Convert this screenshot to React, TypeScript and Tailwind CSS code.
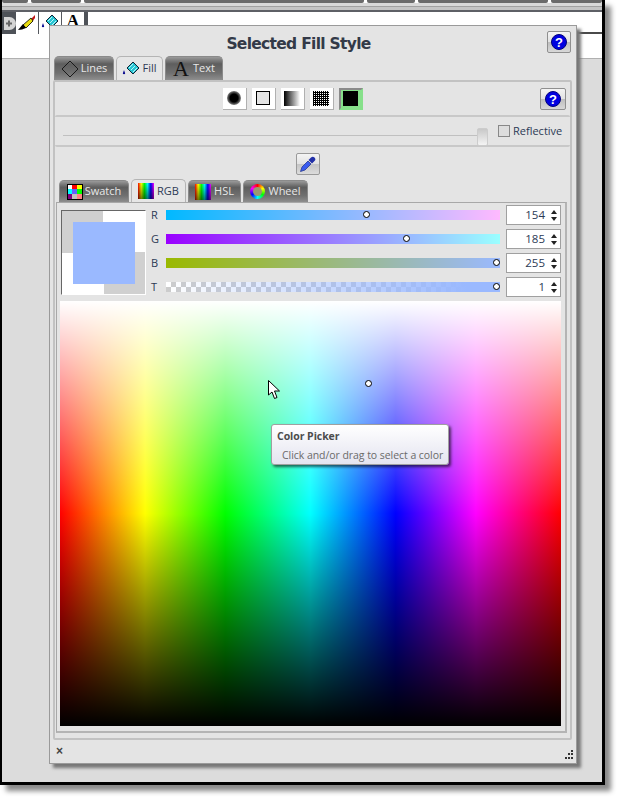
import React from "react";

function Help({ w = "w-[24px]", h = "h-[22px]" }: { w?: string; h?: string }) {
  return (
    <div className={`${w} ${h} flex items-center justify-center rounded-[2px] border border-[#8f8f8f] bg-[linear-gradient(#f4f4f4,#e2e2e2_50%,#bdbdbd_50%,#d8d8d8)]`}>
      <div className="w-[16px] h-[16px] rounded-full bg-[#0000e0] border border-[#00007a] flex items-center justify-center text-white text-[13px] font-bold leading-none [font-family:'Liberation_Sans',sans-serif]">?</div>
    </div>
  );
}

function Bucket({ s = 15 }: { s?: number }) {
  return (
    <svg width={s + 3} height={s} viewBox="0 0 18 15">
      <path d="M5 7 L11 1 L17 7 L11 13 Z" fill="#25c6d4" stroke="#123" strokeWidth="1" />
      <path d="M7 7 L11 3 M9 9 L13 5 M11 11 L15 7" stroke="#bdf4f8" strokeWidth="1" />
      <path d="M2 9 L3.2 12.5 A1.4 1.4 0 0 1 0.8 12.5 Z" fill="#00008c" />
    </svg>
  );
}

function Brush() {
  return (
    <svg width="18" height="16" viewBox="0 0 18 16">
      <path d="M13 4 L17 0 L17 3 L14 7 Z" fill="#c01818" />
      <path d="M5 10 L13 3 L15 6 L8 13 Z" fill="#e8dc10" stroke="#000" strokeWidth="0.8" />
      <path d="M0 15 L5 9 L8 13 Q4 15 0 15 Z" fill="#000" />
    </svg>
  );
}

function Tab({ active, w, children, h = "h-[24px]" }: { active?: boolean; w: string; h?: string; children: React.ReactNode }) {
  return (
    <div
      className={`${w} ${h} flex items-center justify-center gap-[2px] rounded-t-[5px] border border-b-0 text-[11px] ${
        active
          ? "bg-[#e6e6e6] border-[#b4b4b4] text-[#2c3a55]"
          : "bg-[linear-gradient(#9a9a9a,#5e5e5e_30%,#707070_70%,#8e8e8e)] border-[#8a8a8a] text-[#e8e8e8] mt-[1px]"
      }`}
    >
      {children}
    </div>
  );
}

function Style({ children, selected }: { children: React.ReactNode; selected?: boolean }) {
  return (
    <div className={`w-[24px] h-[22px] flex items-center justify-center ${selected ? "border-2 border-[#86e08a] border-t-[#8a8a8a] border-l-[#8a8a8a] bg-[#86e08a]" : "bg-white border-r border-b border-[#b0b0b0]"}`}>
      {children}
    </div>
  );
}

function Num({ v }: { v: string }) {
  return (
    <div className="w-[55px] h-[20px] bg-white border border-[#a0a0a0] flex items-center justify-end pr-[3px] gap-[5px] text-[11.5px] text-[#2c3a55]">
      <span>{v}</span>
      <div className="flex flex-col gap-[3px] w-[7px] items-center">
        <div className="w-0 h-0 border-x-[3px] border-x-transparent border-b-[4px] border-b-[#222]" />
        <div className="w-0 h-0 border-x-[3px] border-x-transparent border-t-[4px] border-t-[#222]" />
      </div>
    </div>
  );
}

function Knob({ pos }: { pos: string }) {
  return <div className={`absolute top-[-1px] ${pos} w-[7px] h-[7px] mt-[2px] rounded-full bg-white border border-black`} />;
}

function SliderRow({ label, bar, pos, v }: { label: string; bar: string; pos: string; v: string }) {
  return (
    <div className="flex items-center h-[20px]">
      <span className="w-[19px] text-[11px] text-[#2c3a55] pl-[4px]">{label}</span>
      <div className={`relative w-[334px] h-[10px] ${bar}`}>
        <Knob pos={pos} />
      </div>
      <div className="w-[6px]" />
      <Num v={v} />
    </div>
  );
}

export default function App() {
  return (
    <div className="relative w-[619px] h-[799px] bg-white overflow-hidden [font-family:'Open_Sans','Liberation_Sans',sans-serif]">
      <div className="w-[605px] h-[785px] flex flex-col bg-[#dcdcdc] border-l-2 border-r-[3px] border-b-[3px] border-black shadow-[6px_6px_5px_#8a8a8a]">
        <div className="h-[12px] shrink-0 flex flex-col bg-white">
          <div className="h-[3px] flex gap-[3px] bg-white">
            <div className="w-[26px] bg-[#6a6a6a] rounded-b-[2px]" />
            <div className="w-[50px] bg-[#6a6a6a] rounded-b-[2px]" />
            <div className="w-[280px] bg-[#6a6a6a] rounded-b-[2px]" />
            <div className="w-[48px] bg-[#6a6a6a] rounded-b-[2px]" />
            <div className="w-[130px] bg-[#6a6a6a] rounded-b-[2px]" />
            <div className="flex-1 bg-[#6a6a6a] rounded-b-[2px]" />
          </div>
          <div className="h-[3px] bg-[#d8d8d8]" />
          <div className="h-[1px] bg-[#a0a0a0]" />
          <div className="h-[3px] bg-[#c4c4c4]" />
          <div className="h-[2px] bg-[#5e6066]" />
        </div>
        <div className="h-[22px] shrink-0 flex bg-white">
          <div className="w-[14px] bg-[#4e5258] flex items-center justify-end">
            <svg width="12" height="13" viewBox="0 0 12 13">
              <path d="M0 0 H5.5 A6.5 6.5 0 0 1 5.5 13 H0 Z" fill="#d4d4d4" />
              <path d="M2 6.5 H8 M5 3.5 V9.5" stroke="#666" strokeWidth="2" />
            </svg>
          </div>
          <div className="w-[22px] flex items-center justify-center bg-white"><Brush /></div>
          <div className="w-[1px] bg-[#55585e]" />
          <div className="w-[22px] flex items-start pt-[2px] justify-center bg-white"><Bucket /></div>
          <div className="w-[1px] bg-[#55585e]" />
          <div className="w-[22px] flex items-start justify-center text-[17px] leading-[18px] font-bold text-black [font-family:'Liberation_Serif',serif]">A</div>
          <div className="w-[4px] bg-[#4e5258]" />
          <div className="flex-1 bg-white border-b-2 border-[#4a4a4a]" />
        </div>
        <div className="h-[25px] shrink-0 bg-white border-b border-[#b0b0b0]" />
        <div className="flex-1" />
      </div>

      {/* floating panel */}
      <div className="absolute left-[49px] top-[25px] w-[528px] h-[739px] bg-[#e4e4e4] border border-[#9a9a9a] shadow-[4px_4px_3px_#777777] flex flex-col pl-[3px] pr-[4px]">
        <div className="h-[31px] mt-[3px] relative flex items-center justify-center pr-[28px] shrink-0">
          <span className="text-[15.5px] font-bold text-[#333a48] [font-family:'DejaVu_Sans',sans-serif] tracking-[-0.7px]">Selected Fill Style</span>
          <div className="absolute right-[1px] top-[2px]"><Help /></div>
        </div>
        <div className="flex items-end gap-[2px] pl-[1px] h-[24px] shrink-0 -mt-[4px]">
          <Tab w="w-[60px]">
            <svg width="18" height="18" viewBox="0 0 18 18"><path d="M9 1 L17 9 L9 17 L1 9 Z" fill="none" stroke="#1a1a1a" strokeWidth="1" /></svg>
            Lines
          </Tab>
          <Tab active w="w-[47px]"><Bucket />Fill</Tab>
          <Tab w="w-[58px]"><span className="text-[22px] leading-none text-[#111] mr-[2px] [font-family:'Liberation_Serif',serif]">A</span>Text</Tab>
        </div>

        <div className="flex-1 border-2 border-[#c2c2c2] rounded-[2px] flex flex-col min-h-0 bg-[#e4e4e4]">
          <div className="h-[33px] shrink-0 relative flex items-center justify-center gap-[5px] pr-[40px]">
            <Style>
              <div className="w-[14px] h-[14px] rounded-full bg-[radial-gradient(#000_0,#000_40%,#ffffff_100%)]" />
            </Style>
            <Style><div className="w-[14px] h-[14px] border border-black bg-[#e4e4e4]" /></Style>
            <Style><div className="w-[16px] h-[15px] bg-[linear-gradient(to_right,#000,#fff)]" /></Style>
            <Style><div className="w-[16px] h-[15px] bg-[conic-gradient(#ffffff_25%,#000000_0)] bg-[length:2px_2px]" /></Style>
            <Style selected><div className="w-[15px] h-[15px] bg-black" /></Style>
            <div className="absolute right-[4px] top-[6px]"><Help w="w-[26px]" h="h-[22px]" /></div>
          </div>
          <div className="h-[32px] shrink-0 border-2 border-x-0 border-[#c8c8c8] rounded-[2px] relative flex items-center">
            <div className="absolute left-[8px] top-[18px] w-[423px] h-[1px] bg-[#c0c0c0]" />
            <div className="absolute left-[422px] top-[11px] w-[11px] h-[18px] rounded-[2px] bg-[linear-gradient(#c8c8c8,#f4f4f4)] border border-[#cccccc]" />
            <div className="absolute left-[443px] top-[6px] flex items-center gap-[3px] text-[11px] text-[#2c3a55]">
              <div className="w-[12px] h-[12px] border border-[#888] bg-[#dddddd]" />
              Reflective
            </div>
          </div>

          <div className="h-[31px] shrink-0 flex items-center justify-center pr-[10px] pt-[3px]">
            <div className="w-[24px] h-[22px] rounded-[2px] border border-[#9a9a9a] bg-[linear-gradient(#f4f4f4,#e2e2e2_50%,#c4c4c4_50%,#dcdcdc)] flex items-center justify-center">
              <svg width="17" height="17" viewBox="0 0 17 17">
                <path d="M1.5 15.5 L3 11 L9 5 L12 8 L6 14 Z" fill="#3a5cf0" stroke="#2a3a90" strokeWidth="0.8" />
                <path d="M9.5 4 L12 1.5 A2.2 2.2 0 0 1 15.5 5 L13 7.5 Z" fill="#2230a8" />
              </svg>
            </div>
          </div>

          <div className="flex items-end gap-[2px] pl-[4px] h-[24px] shrink-0">
            <Tab w="w-[70px]" h="h-[22px]">
              <div className="w-[16px] h-[16px] grid grid-cols-3 bg-black p-[1px] gap-0">
                {["#ffffff", "#ff0000", "#ffff00", "#00ffff", "#6060ff", "#00ff00", "#800080", "#c0c0c0", "#ff8080"].map((c) => (
                  <div key={c} style={{ background: c }} />
                ))}
              </div>
              Swatch
            </Tab>
            <Tab active w="w-[55px]" h="h-[23px]">
              <div className="w-[16px] h-[16px] mr-[1px] bg-[linear-gradient(#0000,#0008),linear-gradient(to_right,#f00,#ff0,#0f0,#0ff,#00f,#f0f)]" />
              RGB
            </Tab>
            <Tab w="w-[53px]" h="h-[22px]">
              <div className="w-[16px] h-[16px] mr-[1px] bg-[linear-gradient(#0000,#0008),linear-gradient(to_right,#f00,#ff0,#0f0,#0ff,#00f,#f0f)]" />
              HSL
            </Tab>
            <Tab w="w-[65px]" h="h-[22px]">
              <div className="w-[15px] h-[15px] rounded-full mr-[1px] bg-[conic-gradient(#f00,#ff0,#0f0,#0ff,#00f,#f0f,#f00)] flex items-center justify-center">
                <div className="w-[9px] h-[9px] rounded-full bg-[#9a9a70]" />
              </div>
              Wheel
            </Tab>
          </div>

          <div className="h-[531px] ml-[1px] mr-[3px] shrink-0 border border-[#a8a8a8] border-b-2 border-r-2 border-b-[#b4b4b4] border-r-[#b4b4b4] flex flex-col pl-[3px]">
            <div className="flex pt-[2px] h-[98px] shrink-0">
              <div className="w-[85px] h-[85px] ml-[1px] mt-[5px] border border-[#666666] border-r-white border-b-white bg-[conic-gradient(#ffffff_25%,#d0d0d0_0_50%,#ffffff_0_75%,#d0d0d0_0)] flex items-center justify-center">
                <div className="w-[62px] h-[62px] bg-[#9ab9ff]" />
              </div>
              <div className="flex flex-col gap-[4px] ml-[1px]">
                <SliderRow label="R" bar="bg-[linear-gradient(to_right,#00b9ff,#ffb9ff)]" pos="left-[197px]" v="154" />
                <SliderRow label="G" bar="bg-[linear-gradient(to_right,#9a00ff,#9affff)]" pos="left-[237px]" v="185" />
                <SliderRow label="B" bar="bg-[linear-gradient(to_right,#9ab900,#9ab9ff)]" pos="left-[327px]" v="255" />
                <SliderRow label="T" bar="bg-[linear-gradient(to_right,transparent,#9ab9ff_90%),repeating-conic-gradient(#cccccc_0_25%,#ffffff_0_50%)] bg-[length:100%_100%,10px_10px]" pos="left-[327px]" v="1" />
              </div>
            </div>
            <div className="w-[501px] h-[425px] bg-[linear-gradient(#ffffff,#ffffff00_50%,#00000000_50%,#000000),linear-gradient(to_right,#ff0000,#ffff00_17%,#00ff00_33%,#00ffff_50%,#0000ff_67%,#ff00ff_83%,#ff0000)]" />
          </div>
        </div>

        <div className="h-[23px] shrink-0 relative">
          <span className="absolute left-[3px] top-[3px] text-[12px] leading-[16px] font-bold text-[#444] [font-family:'Liberation_Sans',sans-serif]">×</span>
          <svg className="absolute right-[-2px] bottom-[3px]" width="10" height="10" viewBox="0 0 10 10" fill="#333">
            <rect x="7" y="0" width="2" height="2" /><rect x="4" y="3" width="2" height="2" /><rect x="7" y="3" width="2" height="2" />
            <rect x="1" y="7" width="2" height="2" /><rect x="4" y="7" width="2" height="2" /><rect x="7" y="7" width="2" height="2" />
          </svg>
        </div>
      </div>

      {/* marker on colour field */}
      <div className="absolute left-[365px] top-[380px] w-[7px] h-[7px] rounded-full bg-white border border-black" />
      {/* mouse pointer */}
      <svg className="absolute left-[268px] top-[380px]" width="13" height="20" viewBox="0 0 13 20">
        <path d="M0.5 0.5 L0.5 15 L4 12 L6.5 18.5 L9 17.5 L6.5 11 L11.5 11 Z" fill="#ffffff" stroke="#000" strokeWidth="1" />
      </svg>
      {/* tooltip */}
      <div className="absolute left-[271px] top-[424px] w-[178px] h-[41px] rounded-[3px] border border-[#a0a0a0] bg-[linear-gradient(#ffffff,#e4e4f0)] shadow-[2px_2px_3px_#00000099] px-[5px] pt-[4px] text-[10.5px] tracking-[-0.05px] text-[#4c4c4c]">
        <div className="font-bold leading-[14px]">Color Picker</div>
        <div className="mt-[5px] pl-[5px] leading-[14px] text-[#6a6a6a] whitespace-nowrap">Click and/or drag to select a color</div>
      </div>
    </div>
  );
}
